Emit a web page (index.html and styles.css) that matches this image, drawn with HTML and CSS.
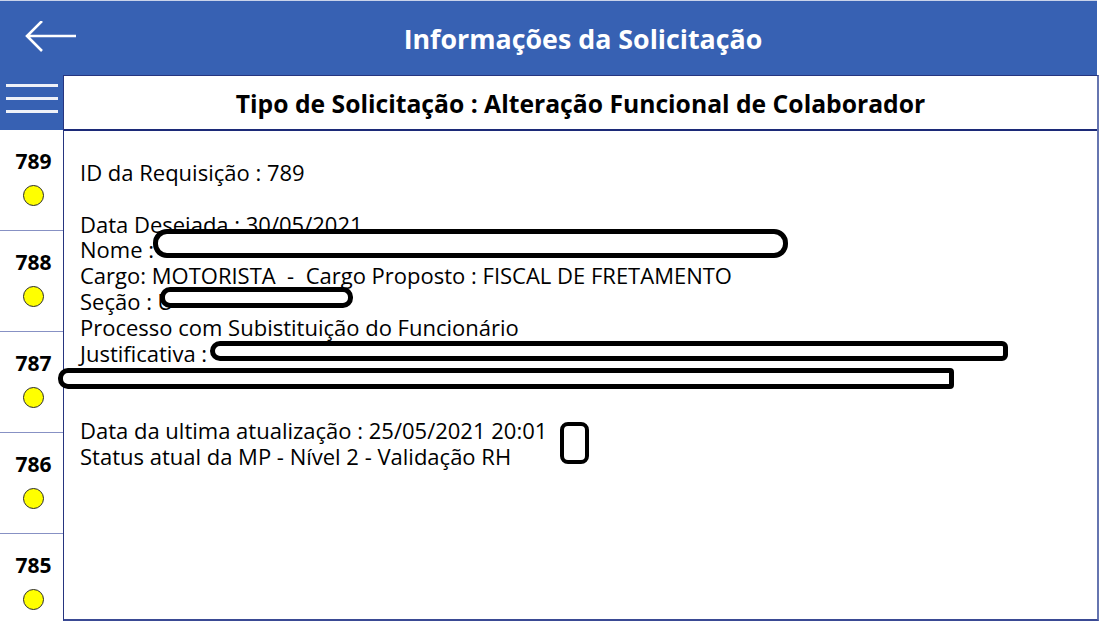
FILE: index.html
```html
<!DOCTYPE html>
<html lang="pt">
<head>
<meta charset="utf-8">
<title>Informações da Solicitação</title>
<link rel="stylesheet" href="styles.css">
</head>
<body>
<div class="app">
  <header class="topbar">
    <button class="back" aria-label="Voltar">
      <svg width="52" height="34" viewBox="0 0 52 34">
        <path d="M2 15 H51 M17 0 L2 15 L17 30" fill="none" stroke="#fff" stroke-width="2.6" stroke-linecap="butt" stroke-linejoin="miter"/>
      </svg>
    </button>
    <h1 class="title">Informações da Solicitação</h1>
  </header>
  <div class="main">
    <aside class="sidebar">
      <div class="menu">
        <span class="bar"></span><span class="bar"></span><span class="bar"></span>
      </div>
      <div class="item"><span class="num">789</span><span class="dot"></span></div>
      <div class="item"><span class="num">788</span><span class="dot"></span></div>
      <div class="item"><span class="num">787</span><span class="dot"></span></div>
      <div class="item"><span class="num">786</span><span class="dot"></span></div>
      <div class="item"><span class="num">785</span><span class="dot"></span></div>
    </aside>
    <section class="panel">
      <div class="panel-head">Tipo de Solicitação : Alteração Funcional de Colaborador</div>
      <div class="panel-body">
        <p>ID da Requisição : 789</p>
        <p>&nbsp;</p>
        <p>Data Deseiada : 30/05/2021</p>
        <p>Nome : </p>
        <p>Cargo: MOTORISTA&nbsp; -&nbsp; Cargo Proposto : FISCAL DE FRETAMENTO</p>
        <p>Seção : U</p>
        <p>Processo com Subistituição do Funcionário</p>
        <p>Justificativa : </p>
        <p>&nbsp;</p>
        <p>&nbsp;</p>
        <p>Data da ultima atualização : 25/05/2021 20:01</p>
        <p>Status atual da MP - Nível 2 - Validação RH</p>
      </div>
    </section>
  </div>
  <div class="redact r1"></div>
  <div class="redact r2"></div>
  <div class="redact r3"></div>
  <div class="redact r4"></div>
  <div class="redact r5"></div>
</div>
</body>
</html>
```

FILE: styles.css
```css
* { box-sizing: border-box; }
html, body { margin: 0; padding: 0; }
body {
  font-family: "Open Sans", "Liberation Sans", sans-serif;
  background: #fff;
  color: #000;
}
.app {
  position: relative;
  width: 1099px;
  height: 621px;
  display: flex;
  flex-direction: column;
  overflow: hidden;
}
.topbar {
  height: 75px;
  flex: none;
  background: #3761b3;
  display: flex;
  align-items: center;
  position: relative;
  margin-right: 2px;
  border-top: 1px solid #c9d3ea;
}
.back {
  background: none;
  border: 0;
  padding: 0;
  margin-left: 25px;
  margin-top: -1px;
  width: 52px;
  height: 34px;
  display: flex;
}
.title {
  flex: 1;
  margin: 0;
  text-align: center;
  color: #fff;
  font-size: 26.8px;
  font-weight: 700;
  padding-right: 8px;
  padding-top: 1px;
}
.main {
  flex: 1;
  display: flex;
  min-height: 0;
}
.sidebar {
  width: 63px;
  flex: none;
  display: flex;
  flex-direction: column;
}
.menu {
  height: 55px;
  flex: none;
  background: #3761b3;
  display: flex;
  flex-direction: column;
  gap: 10.5px;
  padding: 9px 5px 0 6px;
}
.bar {
  display: block;
  height: 2.5px;
  background: #eef1f8;
}
.item {
  height: 101px;
  flex: none;
  border-bottom: 1px solid #8791c4;
  display: flex;
  flex-direction: column;
  align-items: center;
  padding-top: 17px;
  padding-left: 4px;
}
.num {
  font-weight: 700;
  font-size: 21px;
  line-height: 28px;
}
.dot {
  margin-top: 10px;
  width: 21px;
  height: 21px;
  border-radius: 50%;
  background: #ffff00;
  border: 1.5px solid #2a2a2a;
}
.panel {
  flex: 1;
  border: 1px solid #26357f;
  border-right: 2px solid #6675b0;
  border-bottom: 2px solid #3a4a94;
  display: flex;
  flex-direction: column;
  min-width: 0;
}
.panel-head {
  height: 55px;
  flex: none;
  border-bottom: 2px solid #1c2a78;
  display: flex;
  align-items: center;
  justify-content: center;
  font-weight: 700;
  font-size: 24.7px;
  padding-top: 2px;
}
.panel-body {
  padding: 29px 0 0 16px;
  font-size: 22px;
  line-height: 25.8px;
}
.panel-body p {
  margin: 0;
  white-space: pre;
}
.redact {
  position: absolute;
  border: 5px solid #000;
  background: #fff;
  border-radius: 14px;
}
.r1 { left: 153px; top: 229px; width: 635px; height: 29px; }
.r2 { left: 160px; top: 287px; width: 193px; height: 21px; border-radius: 10px; }
.r3 { left: 210px; top: 341px; width: 798px; height: 20px; border-radius: 10px 6px 6px 10px; }
.r4 { left: 58px; top: 368px; width: 896px; height: 21px; border-radius: 10px 4px 4px 10px; }
.r5 { left: 560px; top: 422px; width: 29px; height: 42px; border-radius: 8px; border-width: 4px; }
```
